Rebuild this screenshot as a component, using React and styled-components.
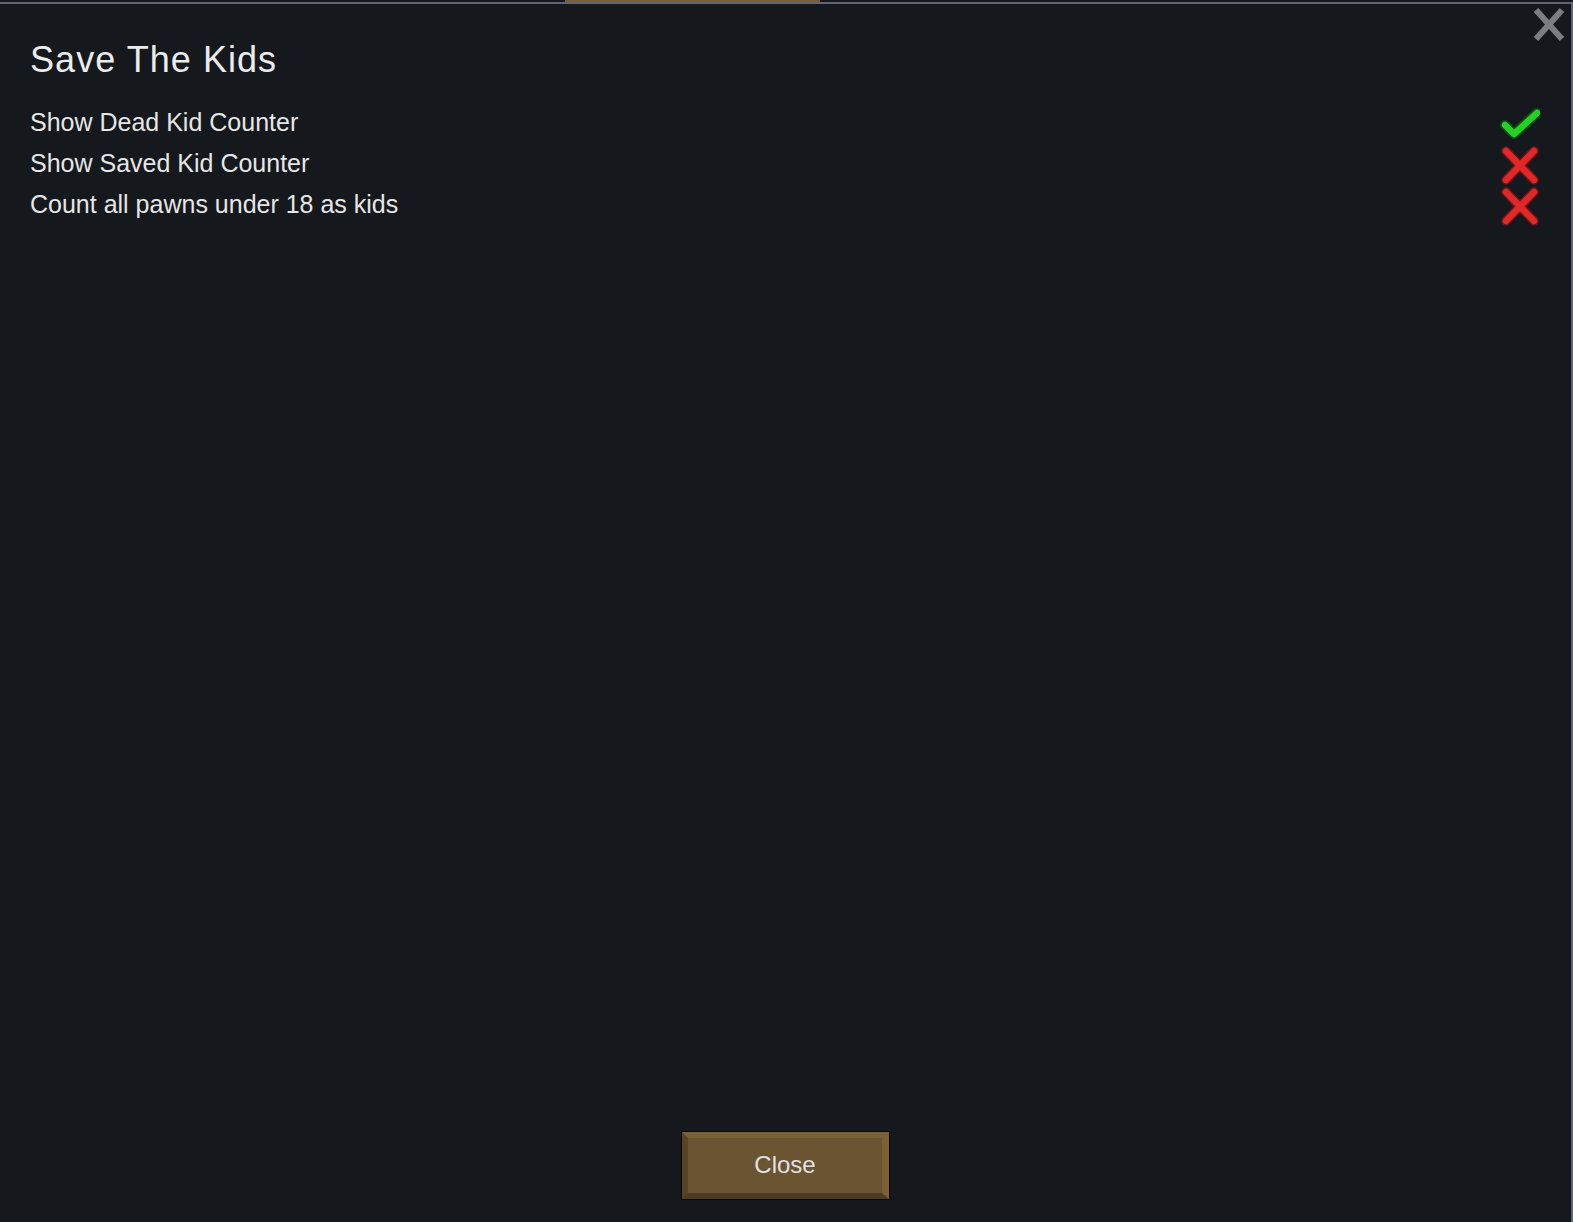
import React, { useState } from "react";
import styled, { createGlobalStyle } from "styled-components";

const GlobalStyle = createGlobalStyle`
  html, body {
    margin: 0;
    padding: 0;
    background: #15181c;
  }
  #root {
    height: 1222px;
  }
`;

const Page = styled.div`
  display: flex;
  flex-direction: column;
  height: 1222px;
  overflow: hidden;
  font-family: "Liberation Sans", Arial, sans-serif;
  color: #e4e4e4;
`;

const Backdrop = styled.div`
  display: flex;
  height: 2px;
  background: #15181c;
`;

const BackdropTab = styled.div`
  margin-left: 565px;
  width: 255px;
  background: #7a5c36;
`;

const Window = styled.div`
  flex: 1;
  display: flex;
  flex-direction: column;
  background: #15181c;
  border-top: 2px solid #5d6672;
  border-right: 2px solid #5d6672;
  padding: 0 31px 22px 30px;
`;

const Header = styled.div`
  display: flex;
  justify-content: space-between;
  align-items: flex-start;
  height: 98px;
`;

const Title = styled.h1`
  margin: 35px 0 0 0;
  font-size: 36px;
  line-height: 42px;
  font-weight: 400;
  letter-spacing: 1.05px;
  color: #ececec;
`;

const CloseX = styled.button`
  margin: 4px -25px 0 0;
  padding: 0;
  width: 32px;
  height: 33px;
  border: 0;
  background: none;
  cursor: pointer;
  display: flex;
`;

const Options = styled.div`
  display: flex;
  flex-direction: column;
`;

const Row = styled.div`
  display: flex;
  align-items: center;
  justify-content: space-between;
  height: 41px;
  cursor: pointer;
`;

const Label = styled.span`
  font-size: 25px;
  color: #e6e6e6;
`;

const Box = styled.span`
  display: flex;
  width: 40px;
  height: 40px;
  margin: 5px 0 0 0;
`;

const Footer = styled.div`
  margin-top: auto;
  display: flex;
  justify-content: center;
  padding-left: 1px;
`;

const CloseButton = styled.button`
  box-sizing: border-box;
  width: 207px;
  height: 67px;
  margin-bottom: 1px;
  padding: 0 0 2px 0;
  border-style: solid;
  border-width: 6px 7px 6px 6px;
  border-color: #7a6036 #7c6137 #4e3c21 #574325;
  box-shadow: 0 0 0 1px #0c0a06;
  background: #6a5431;
  font-family: "Liberation Sans", Arial, sans-serif;
  font-size: 24px;
  color: #e2e2e2;
  cursor: pointer;
`;

const CheckIcon = () => (
  <svg width="40" height="40" viewBox="0 0 40 40">
    <path d="M5 20 L14 29 L37 8" fill="none" stroke="#0f4a0f" strokeWidth="10" strokeLinecap="round" strokeLinejoin="round" />
    <path d="M5 20 L14 29 L37 8" fill="none" stroke="#23d023" strokeWidth="6.5" strokeLinecap="round" strokeLinejoin="round" />
  </svg>
);

const CrossIcon = () => (
  <svg width="40" height="40" viewBox="0 0 40 40">
    <path d="M6 5 L34 34 M34 5 L6 34" fill="none" stroke="#6e1414" strokeWidth="9.5" strokeLinecap="round" />
    <path d="M6 5 L34 34 M34 5 L6 34" fill="none" stroke="#e02828" strokeWidth="6.5" strokeLinecap="round" />
  </svg>
);

const CloseGlyph = () => (
  <svg width="32" height="33" viewBox="0 0 32 33">
    <path d="M3 2 L29 31 M29 2 L3 31" stroke="#7b7e81" strokeWidth="6" />
  </svg>
);

const settings = [
  { key: "dead", label: "Show Dead Kid Counter", on: true },
  { key: "saved", label: "Show Saved Kid Counter", on: false },
  { key: "all", label: "Count all pawns under 18 as kids", on: false },
];

export default function App() {
  const [values, setValues] = useState(
    Object.fromEntries(settings.map((s) => [s.key, s.on]))
  );

  const toggle = (key) => setValues((prev) => ({ ...prev, [key]: !prev[key] }));

  return (
    <>
      <GlobalStyle />
      <Page>
        <Backdrop>
          <BackdropTab />
        </Backdrop>
        <Window>
          <Header>
            <Title>Save The Kids</Title>
            <CloseX aria-label="Close">
              <CloseGlyph />
            </CloseX>
          </Header>
          <Options>
            {settings.map((s) => (
              <Row key={s.key} onClick={() => toggle(s.key)}>
                <Label>{s.label}</Label>
                <Box>{values[s.key] ? <CheckIcon /> : <CrossIcon />}</Box>
              </Row>
            ))}
          </Options>
          <Footer>
            <CloseButton>Close</CloseButton>
          </Footer>
        </Window>
      </Page>
    </>
  );
}
